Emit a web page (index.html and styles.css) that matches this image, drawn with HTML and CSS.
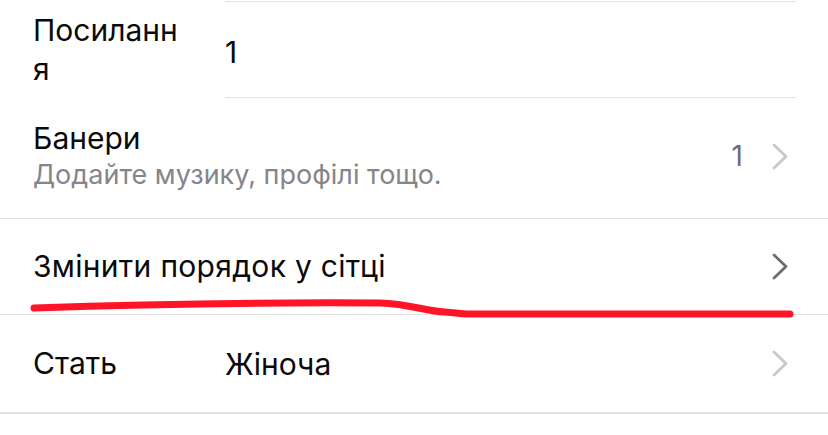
FILE: index.html
```html
<!DOCTYPE html>
<html lang="uk">
<head>
    <meta charset="UTF-8">
    <meta name="viewport" content="width=device-width, initial-scale=1.0">
    <title>Редагувати профіль</title>
    <link rel="stylesheet" href="styles.css">
</head>
<body>
    <div class="screen">
        <div class="list">
            <!-- Посилання -->
            <div class="field-row first">
                <div class="field-label wrap">Посилання</div>
                <div class="field-value inset">1</div>
            </div>

            <!-- Банери -->
            <div class="row banner-row">
                <div class="row-text">
                    <div class="row-title">Банери</div>
                    <div class="row-subtitle">Додайте музику, профілі тощо.</div>
                </div>
                <span class="row-count">1</span>
                <svg class="chevron light" viewBox="0 0 16 27"><polyline points="2,2 14,13.5 2,25"/></svg>
            </div>

            <!-- Порядок у сітці -->
            <div class="row">
                <div class="row-text">
                    <div class="row-title wide">Змінити порядок у сітці</div>
                </div>
                <svg class="chevron" viewBox="0 0 16 27"><polyline points="2,2 14,13.5 2,25"/></svg>
            </div>

            <!-- Стать -->
            <div class="field-row last">
                <div class="field-label">Стать</div>
                <div class="field-value">Жіноча</div>
                <svg class="chevron light" viewBox="0 0 16 27"><polyline points="2,2 14,13.5 2,25"/></svg>
            </div>
        </div>

        <!-- позначка червоним -->
        <svg class="scribble" viewBox="0 0 828 435">
            <path d="M34 308 Q 200 302 380 303 C 410 304 425 311 445 312 L 466 314 L 790 314"/>
        </svg>
    </div>
</body>
</html>
```

FILE: styles.css
```css
body {
    margin: 0;
    background: #fff;
    font-family: 'Inter', 'Noto Sans', sans-serif;
    color: #0a0a0a;
}

.screen {
    position: relative;
    width: 828px;
    height: 435px;
    overflow: hidden;
}

.list {
    padding-top: 1px;
}

/* рядки з підписом і значенням */
.field-row {
    display: flex;
    align-items: stretch;
    font-size: 30px;
}

.field-row.first {
    height: 97px;
}

.field-row.last {
    height: 99px;
    border-bottom: 2px solid #e2e2e4;
    box-sizing: border-box;
    padding-right: 40px;
    align-items: center;
}

.field-label {
    width: 158px;
    padding-left: 33px;
    margin-right: 34px;
    display: flex;
    align-items: center;
    line-height: 39px;
}

.field-label.wrap {
    word-break: break-all;
}

.field-value {
    flex: 1;
    display: flex;
    align-items: center;
}

.field-value.inset {
    margin-right: 32px;
    border-top: 1px solid #e2e2e4;
    border-bottom: 1px solid #e2e2e4;
    padding-top: 4px;
}

/* звичайні рядки */
.row {
    display: flex;
    align-items: center;
    height: 96px;
    box-sizing: border-box;
    padding: 0 40px 0 33px;
    border-bottom: 1px solid #e2e2e4;
}

.banner-row {
    height: 121px;
    padding-bottom: 4px;
}

.row-text {
    flex: 1;
}

.row-title {
    font-size: 30px;
    line-height: 35px;
}

.row-title.wide {
    letter-spacing: 0.3px;
}

.row-subtitle {
    font-size: 27px;
    line-height: 34px;
    color: #85858a;
    margin-top: 2px;
}

.row-count {
    font-size: 28px;
    color: #6d6d72;
    margin-right: 29px;
}

.chevron {
    width: 16px;
    height: 27px;
    fill: none;
    stroke: #6d6d72;
    stroke-width: 2.8;
    stroke-linecap: round;
    stroke-linejoin: round;
}

.chevron.light {
    stroke: #c9c9cd;
}

.scribble {
    position: absolute;
    top: 0;
    left: 0;
    width: 828px;
    height: 435px;
    pointer-events: none;
    fill: none;
    stroke: #ff1428;
    stroke-width: 7;
    stroke-linecap: round;
    stroke-linejoin: round;
}
```
